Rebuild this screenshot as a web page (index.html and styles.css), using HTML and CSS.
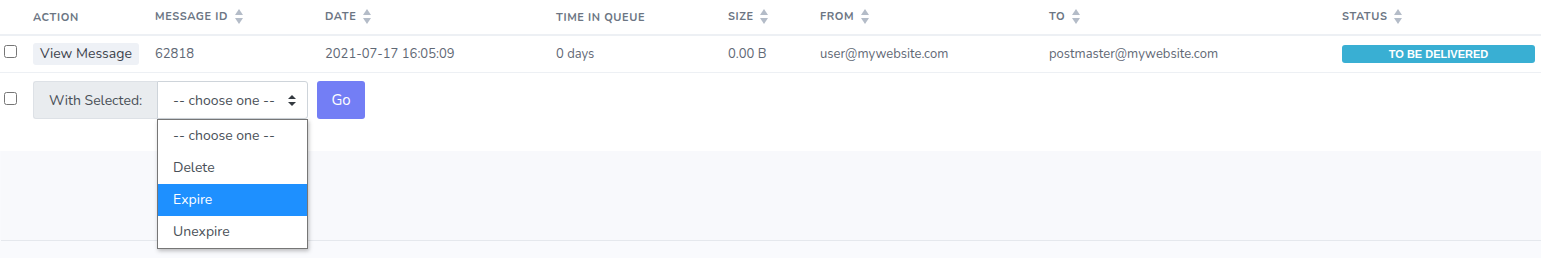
FILE: index.html
```html
<!DOCTYPE html>
<html lang="en">
<head>
  <meta charset="UTF-8">
  <title>Mail Queue</title>
  <link rel="stylesheet" href="styles.css">
</head>
<body>

  <!-- Queue table -->
  <table class="queue-table">
    <colgroup>
      <col style="width: 29px">
      <col style="width: 122px">
      <col style="width: 170px">
      <col style="width: 231px">
      <col style="width: 172px">
      <col style="width: 92px">
      <col style="width: 229px">
      <col style="width: 293px">
      <col style="width: 203px">
    </colgroup>
    <thead>
      <tr>
        <th></th>
        <th>Action</th>
        <th>Message ID <span class="sort"><svg width="8" height="15" viewBox="0 0 8 15"><path d="M4 0 L8 6 L0 6 Z" fill="#b4bcc8"/><path d="M0 9 L8 9 L4 15 Z" fill="#b4bcc8"/></svg></span></th>
        <th>Date <span class="sort"><svg width="8" height="15" viewBox="0 0 8 15"><path d="M4 0 L8 6 L0 6 Z" fill="#b4bcc8"/><path d="M0 9 L8 9 L4 15 Z" fill="#b4bcc8"/></svg></span></th>
        <th>Time in Queue</th>
        <th>Size <span class="sort"><svg width="8" height="15" viewBox="0 0 8 15"><path d="M4 0 L8 6 L0 6 Z" fill="#b4bcc8"/><path d="M0 9 L8 9 L4 15 Z" fill="#b4bcc8"/></svg></span></th>
        <th>From <span class="sort"><svg width="8" height="15" viewBox="0 0 8 15"><path d="M4 0 L8 6 L0 6 Z" fill="#b4bcc8"/><path d="M0 9 L8 9 L4 15 Z" fill="#b4bcc8"/></svg></span></th>
        <th>To <span class="sort"><svg width="8" height="15" viewBox="0 0 8 15"><path d="M4 0 L8 6 L0 6 Z" fill="#b4bcc8"/><path d="M0 9 L8 9 L4 15 Z" fill="#b4bcc8"/></svg></span></th>
        <th>Status <span class="sort"><svg width="8" height="15" viewBox="0 0 8 15"><path d="M4 0 L8 6 L0 6 Z" fill="#b4bcc8"/><path d="M0 9 L8 9 L4 15 Z" fill="#b4bcc8"/></svg></span></th>
      </tr>
    </thead>
    <tbody>
      <tr>
        <td><input type="checkbox" class="row-check"></td>
        <td><span class="view-btn">View Message</span></td>
        <td>62818</td>
        <td>2021-07-17 16:05:09</td>
        <td>0 days</td>
        <td>0.00 B</td>
        <td>user@mywebsite.com</td>
        <td>postmaster@mywebsite.com</td>
        <td><span class="status-badge">To Be Delivered</span></td>
      </tr>
    </tbody>
  </table>

  <!-- Bulk actions -->
  <div class="bulk-actions">
    <input type="checkbox" class="row-check">
    <div class="input-group">
      <span class="addon">With Selected:</span>
      <div class="select-wrap">
        <div class="fake-select">
          <span>-- choose one --</span>
          <svg class="select-arrow" width="8" height="11" viewBox="0 0 8 11"><path d="M4 0 L8 4 L0 4 Z" fill="#343a40"/><path d="M0 7 L8 7 L4 11 Z" fill="#343a40"/></svg>
        </div>
        <ul class="dropdown">
          <li>-- choose one --</li>
          <li>Delete</li>
          <li class="active">Expire</li>
          <li>Unexpire</li>
        </ul>
      </div>
    </div>
    <button class="go-btn">Go</button>
  </div>

  <div class="footer-panel"></div>

</body>
</html>
```

FILE: styles.css
```css
html, body {
  margin: 0;
  padding: 0;
  font-family: 'Nunito', 'Lato', sans-serif;
  background-color: #f9fafd;
  color: #5a6270;
}

body {
  width: 1541px;
  height: 258px;
  overflow: hidden;
}

.queue-table {
  width: 1541px;
  table-layout: fixed;
  border-collapse: collapse;
  background-color: #fff;
}

.queue-table th {
  height: 34px;
  padding: 0 0 0 4px;
  text-align: left;
  font-size: 11px;
  font-weight: 700;
  letter-spacing: 0.6px;
  text-transform: uppercase;
  color: #6b7583;
  border-bottom: 2px solid #edf0f4;
  white-space: nowrap;
}

.queue-table td {
  height: 36px;
  padding: 0 0 0 4px;
  font-size: 13px;
  color: #5f6875;
  border-bottom: 1px solid #edf0f4;
  white-space: nowrap;
}

.queue-table th:first-child,
.queue-table td:first-child {
  padding: 0;
}

.queue-table td:last-child {
  padding-right: 6px;
}

.sort {
  display: inline-block;
  vertical-align: middle;
  margin-left: 3px;
  position: relative;
  top: -1px;
}

.sort svg {
  display: block;
}

.row-check {
  width: 13px;
  height: 13px;
  margin: 0 0 0 4px;
  vertical-align: middle;
  position: relative;
  top: -3px;
}

.view-btn {
  display: inline-block;
  padding: 1px 7px 2px;
  background-color: #eef1f6;
  border-radius: 3px;
  color: #3d434c;
  font-size: 14px;
}

.status-badge {
  display: block;
  height: 18px;
  line-height: 18px;
  background-color: #39afd3;
  color: #fff;
  border-radius: 3px;
  text-align: center;
  text-transform: uppercase;
  font-family: 'Liberation Sans', Arial, sans-serif;
  font-size: 11px;
  font-weight: 700;
}

.bulk-actions {
  display: flex;
  align-items: center;
  height: 38px;
  padding: 8px 0 32px;
  background-color: #fff;
}

.bulk-actions .row-check {
  top: -2px;
  margin-right: 16px;
}

.input-group {
  display: flex;
  height: 38px;
}

.addon {
  display: flex;
  align-items: center;
  box-sizing: border-box;
  width: 124px;
  padding-left: 15px;
  background-color: #e9ecef;
  border: 1px solid #dde1e6;
  border-right: none;
  border-radius: 3px 0 0 3px;
  color: #495057;
  font-size: 14px;
}

.select-wrap {
  position: relative;
  width: 151px;
}

.fake-select {
  display: flex;
  align-items: center;
  justify-content: space-between;
  box-sizing: border-box;
  height: 38px;
  padding: 0 11px 0 15px;
  border: 1px solid #ced4da;
  border-radius: 0 3px 3px 0;
  background-color: #fff;
  color: #495057;
  font-size: 14px;
}

.dropdown {
  position: absolute;
  top: 38px;
  left: 0;
  width: 151px;
  box-sizing: border-box;
  margin: 0;
  padding: 0;
  list-style: none;
  background-color: #fff;
  border: 1px solid #767676;
  box-shadow: 1px 2px 4px rgba(0, 0, 0, 0.25);
  z-index: 2;
}

.dropdown li {
  height: 32px;
  line-height: 32px;
  padding-left: 15px;
  font-size: 14px;
  color: #495057;
}

.dropdown li.active {
  background-color: #1e90ff;
  color: #fff;
}

.go-btn {
  margin-left: 9px;
  width: 48px;
  height: 38px;
  border: none;
  border-radius: 3px;
  background-color: #737ef5;
  color: #fff;
  font-family: inherit;
  font-size: 15px;
}

.footer-panel {
  height: 89px;
  margin-left: 1px;
  background-color: #f8f9fc;
  border-bottom: 1px solid #e5e8ed;
}
```
